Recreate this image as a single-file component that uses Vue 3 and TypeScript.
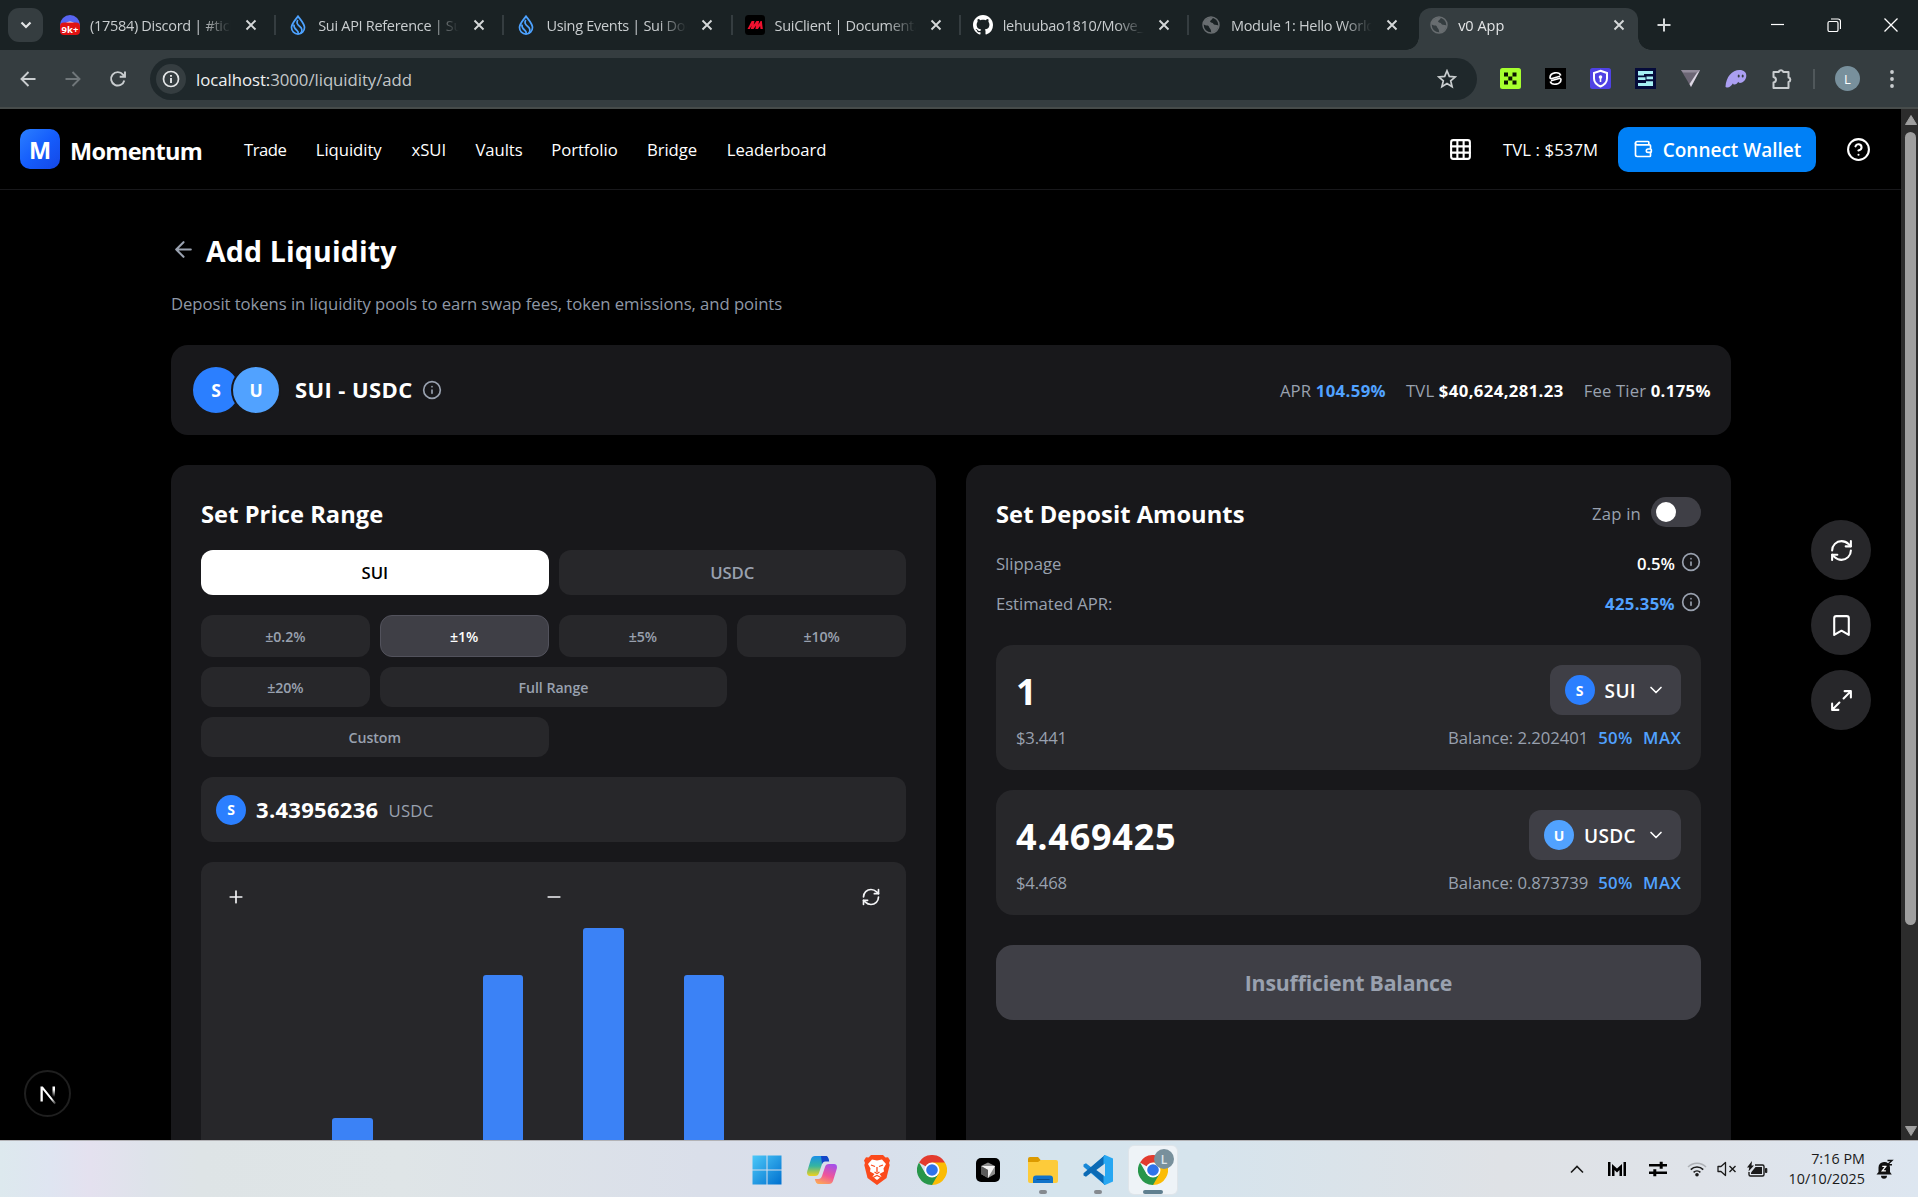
<script setup lang="ts">
interface Tab { icon: string; title: string; sep: boolean; active?: boolean }
const tabs: Tab[] = [
  { icon: 'discord', title: '(17584) Discord | #tickets', sep: true },
  { icon: 'sui', title: 'Sui API Reference | Sui Docs', sep: true },
  { icon: 'sui', title: 'Using Events | Sui Documentation', sep: true },
  { icon: 'mysten', title: 'SuiClient | Documentation', sep: true },
  { icon: 'github', title: 'lehuubao1810/Move_Course', sep: true },
  { icon: 'globe', title: 'Module 1: Hello World', sep: false },
  { icon: 'globe', title: 'v0 App', sep: false, active: true },
]

const favicons: Record<string, string> = {
  discord:
    '<circle cx="10" cy="10" r="10" fill="#5865f2"/><path d="M5 8.500q5-4 10 0z" fill="#fff"/><rect x="0" y="7.500" width="20" height="12.500" rx="4" fill="#e01212"/><text x="10" y="17.600" text-anchor="middle" font-family="Open Sans, sans-serif" font-size="9.500" font-weight="700" fill="#fff">9k+</text>',
  sui:
    '<path d="M10 1.200C7.600 4.700 3.500 8.600 3.500 12.600a6.500 6.500 0 0 0 13 0C16.500 8.600 12.400 4.700 10 1.200z" fill="none" stroke="#4da2ff" stroke-width="1.700"/><path d="M9.800 5c-2 3 0 5 2 6.500 2.600 2 2.700 4.600.8 7M6 9.500c-.6 3.500 1 4.500 3 6 1.200 1 1.500 2 1.200 3.500" fill="none" stroke="#4da2ff" stroke-width="1.700"/>',
  mysten:
    '<rect width="20" height="20" rx="3.500" fill="#000"/><path d="M2.500 14 6.700 6h2.800L8.700 9.800 11.500 6h2.600l-.7 3.800L15.600 6h1.200l1 8h-2.300l-.4-3-2.200 3h-2.500l.6-3.600L8.500 14H5.800l.8-3.600L4.800 14z" fill="#f0112f"/>',
  github:
    '<path transform="scale(1.250)" fill="#fff" d="M8 0C3.580 0 0 3.580 0 8c0 3.540 2.290 6.530 5.470 7.590.4.070.55-.17.55-.38 0-.19-.01-.82-.01-1.490-2.010.37-2.530-.49-2.690-.94-.09-.23-.48-.94-.82-1.130-.28-.15-.68-.52-.01-.53.63-.01 1.080.58 1.230.82.72 1.210 1.870.87 2.330.66.070-.52.28-.87.51-1.070-1.780-.2-3.640-.89-3.640-3.950 0-.87.31-1.590.82-2.150-.08-.2-.36-1.020.08-2.120 0 0 .67-.21 2.200.82.64-.18 1.320-.27 2-.27s1.360.09 2 .27c1.530-1.040 2.200-.82 2.200-.82.44 1.100.16 1.920.08 2.120.51.56.82 1.270.82 2.150 0 3.070-1.870 3.750-3.650 3.950.29.25.54.73.54 1.480 0 1.070-.01 1.930-.01 2.200 0 .21.15.46.55.38A8.010 8.010 0 0 0 16 8c0-4.420-3.580-8-8-8z"/>',
  globe:
    '<circle cx="10" cy="10" r="8" fill="none" stroke="#686d70" stroke-width="1.500"/><path d="M3 6.500C5 3 9 2 12 2.500c-.5 2-2.500 2.500-3 4 .5 1.500 3 .8 3.500 2.500.2 1.200 3 .6 5 1.500-.5 4-3.500 7-7 7.300-.8-1.500-.2-3-1.500-4.300C8 12.500 8 10.800 6.800 10.500 5 10.500 3.500 10 2.500 9.500z" fill="#686d70"/>',
}

// 24x24 stroke icons
const icons: Record<string, string> = {
  grid: '<rect width="18" height="18" x="3" y="3" rx="2"/><path d="M3 9h18M3 15h18M9 3v18M15 3v18"/>',
  wallet:
    '<path d="M19 7V4a1 1 0 0 0-1-1H5a2 2 0 0 0 0 4h15a1 1 0 0 1 1 1v4h-3a2 2 0 0 0 0 4h3a1 1 0 0 0 1-1v-2a1 1 0 0 0-1-1"/><path d="M3 5v14a2 2 0 0 0 2 2h15a1 1 0 0 0 1-1v-4"/>',
  help: '<circle cx="12" cy="12" r="10"/><path d="M9.090 9a3 3 0 0 1 5.830 1c0 2-3 3-3 3M12 17h.01"/>',
  back: '<path d="m12 19-7-7 7-7M19 12H5"/>',
  info: '<circle cx="12" cy="12" r="10"/><path d="M12 16v-4M12 8h.01"/>',
  plus: '<path d="M5 12h14M12 5v14"/>',
  minus: '<path d="M5 12h14"/>',
  refresh:
    '<path d="M3 12a9 9 0 0 1 9-9 9.750 9.750 0 0 1 6.740 2.740L21 8"/><path d="M21 3v5h-5M21 12a9 9 0 0 1-9 9 9.750 9.750 0 0 1-6.740-2.740L3 16"/><path d="M8 16H3v5"/>',
  chevron: '<path d="m6 9 6 6 6-6"/>',
  bookmark: '<path d="m19 21-7-4-7 4V5a2 2 0 0 1 2-2h10a2 2 0 0 1 2 2v16z"/>',
  expand: '<path d="M15 3h6v6M21 3l-7 7M3 21l7-7M9 21H3v-6"/>',
}

const nav = [
  { label: 'Trade', w: 42 },
  { label: 'Liquidity', w: 66 },
  { label: 'xSUI', w: 34 },
  { label: 'Vaults', w: 46 },
  { label: 'Portfolio', w: 66 },
  { label: 'Bridge', w: 50 },
  { label: 'Leaderboard', w: 97 },
]

const presets = [
  { label: '±0.2%', cls: '' },
  { label: '±1%', cls: 'on' },
  { label: '±5%', cls: '' },
  { label: '±10%', cls: '' },
  { label: '±20%', cls: '' },
  { label: 'Full Range', cls: 'two' },
  { label: 'Custom', cls: 'two first' },
]

// liquidity per price bucket, percent of the tallest
const bars = [0, 0, 20, 0, 0, 80, 0, 100, 0, 80, 0, 0, 0]

const deposits = [
  { amount: '1', usd: '$3.441', letter: 'S', token: 'SUI', tone: 'sui', balance: '2.202401' },
  { amount: '4.469425', usd: '$4.468', letter: 'U', token: 'USDC', tone: 'usdc', balance: '0.873739' },
]
const side = ['refresh', 'bookmark', 'expand']
</script>

<template>
  <div class="screen">
    <!-- Browser tab strip -->
    <div class="strip">
      <div class="tab-search">
        <svg width="12" height="8" viewBox="0 0 12 8"><path d="M1.500 1.500 6 6l4.500-4.500" fill="none" stroke="#e3e5e6" stroke-width="2.200" /></svg>
      </div>
      <div v-for="(t, i) in tabs" :key="i" class="tab" :class="{ active: t.active }">
        <svg class="fav" width="20" height="20" viewBox="0 0 20 20" v-html="favicons[t.icon]"></svg>
        <span class="tab-title">{{ t.title }}</span>
        <svg class="tab-x" width="12" height="12" viewBox="0 0 12 12"><path d="m1.500 1.500 9 9m0-9-9 9" stroke="#d5d8d9" stroke-width="1.900" /></svg>
        <i v-if="t.sep" class="sep"></i>
      </div>
      <svg class="newtab" width="14" height="14" viewBox="0 0 14 14"><path d="M7 .5v13M.5 7h13" stroke="#d5d8d9" stroke-width="2" /></svg>
      <div class="win">
        <svg width="14" height="14" viewBox="0 0 14 14"><path d="M1 6.500h13" stroke="#fff" stroke-width="1.200" /></svg>
        <svg width="14" height="14" viewBox="0 0 14 14"><rect x="1" y="3.500" width="10" height="10" rx="1.500" fill="none" stroke="#fff" stroke-width="1.200" /><path d="M4 1h7a2.500 2.500 0 0 1 2.500 2.500V11" fill="none" stroke="#fff" stroke-width="1.200" /></svg>
        <svg width="14" height="14" viewBox="0 0 14 14"><path d="m.5.5 13 13m0-13-13 13" stroke="#fff" stroke-width="1.300" /></svg>
      </div>
    </div>

    <!-- Browser toolbar -->
    <div class="toolbar">
      <div class="navbtns">
        <svg width="20" height="20" viewBox="0 0 20 20"><path d="M17.500 10H4m6.500-7L3.500 10l7 7" fill="none" stroke="#c9cdcf" stroke-width="1.900" /></svg>
        <svg width="20" height="20" viewBox="0 0 20 20"><path d="M2.500 10H16M9.500 3l7 7-7 7" fill="none" stroke="#70777a" stroke-width="1.900" /></svg>
        <svg width="20" height="20" viewBox="0 0 20 20"><path d="M16.300 11.500A6.700 6.700 0 1 1 15 5.600l1.500 2M17 2.500v5.300h-5.300" fill="none" stroke="#c9cdcf" stroke-width="1.900" /></svg>
      </div>
      <div class="omni">
        <span class="site"><svg width="18" height="18" viewBox="0 0 18 18"><circle cx="9" cy="9" r="7.500" fill="none" stroke="#e3e5e6" stroke-width="1.700" /><path d="M9 8v5M9 5v1.800" stroke="#e3e5e6" stroke-width="1.900" /></svg></span>
        <span class="url"><b>localhost:</b>3000/liquidity/add</span>
        <svg class="star" width="20" height="20" viewBox="0 0 20 20"><path d="m10 1.800 2.300 5.600 6 .5-4.600 3.900 1.400 5.900-5.100-3.200-5.100 3.200 1.400-5.900L1.700 7.900l6-.5z" fill="none" stroke="#c9cdcf" stroke-width="1.700" /></svg>
      </div>
      <div class="exts">
        <svg width="21" height="21" viewBox="0 0 21 21"><rect width="21" height="21" rx="2.500" fill="#a6ff2e" /><path d="M4 4.500h4v4H4zM12.500 4.500h4v4h-4zM8.300 8.500h4v4h-4zM4 12.500h4v4H4zM12.500 12.500h4v4h-4z" fill="#0b1400" /></svg>
        <svg width="21" height="21" viewBox="0 0 21 21"><rect width="21" height="21" fill="#000" /><path d="M15.800 7.500C14 3 5.200 4.300 5 9.500c0 1.300 1 1.300 2 1l8-2.200M5.200 13.500C7 18 15.800 16.700 16 11.500c0-1.300-1-1.300-2-1l-8 2.200" fill="none" stroke="#fff" stroke-width="1.600" /></svg>
        <svg width="21" height="21" viewBox="0 0 21 21"><rect width="21" height="21" rx="2.500" fill="#4f42e4" /><path d="M10.500 2.800 17 5v5.500c0 4-2.500 6.200-6.500 8-4-1.800-6.500-4-6.500-8V5z" fill="none" stroke="#fff" stroke-width="2" /><circle cx="10.500" cy="9" r="1.800" fill="#fff" /><path d="M9.700 9h1.600v5H9.700z" fill="#fff" /></svg>
        <svg width="21" height="21" viewBox="0 0 21 21"><rect width="21" height="21" fill="#050b3a" /><path d="M3 3h15v3H9v1.500H3zM3 9.200h7.500V12H3zM11.500 8.500H18v2.800h-6.500zM18 13.200V18H3v-3h8v-1.800z" fill="#a6f0f4" /></svg>
        <svg width="21" height="21" viewBox="0 0 21 21"><path d="M1 2h19L11 19z" fill="#6c6675" /><path d="M20 2 11 19l-1.500-3L17.500 4z" fill="#ddd8e4" /><path d="M1 2h19l-2.500 2.500H3z" fill="#928b9b" /></svg>
        <svg width="22" height="21" viewBox="0 0 22 21"><path d="M.5 18.500C1 9 7 2 14.500 2c4.500 0 7 2.500 6.800 6-.2 4-3.500 7-6.300 7-1 0-1.500-.5-1.700-1.200-.8 1.500-2.200 2.700-3.800 2.700-1 0-1.500-.5-1.500-1.300C6.500 17.500 4.500 19.500 2.500 19.500c-1.200 0-2-.4-2-1z" fill="#ab9ff2" /><ellipse cx="13.700" cy="8" rx="1" ry="1.500" fill="#353d40" /><ellipse cx="17.700" cy="8" rx="1" ry="1.500" fill="#353d40" /></svg>
        <svg width="22" height="22" viewBox="0 0 22 22"><path d="M2.500 4h5.300a2.300 2.300 0 0 1 4.500 0h5.200v5.500a2.300 2.300 0 0 1 0 4.500v6H2.500v-5.500c3.300-.8 3.300-4.700 0-5.500z" fill="none" stroke="#c9cdcf" stroke-width="2" stroke-linejoin="round" /></svg>
        <i class="vr"></i>
        <span class="me">L</span>
        <svg width="6" height="20" viewBox="0 0 6 20"><circle cx="3" cy="3" r="1.900" fill="#c9cdcf" /><circle cx="3" cy="10" r="1.900" fill="#c9cdcf" /><circle cx="3" cy="17" r="1.900" fill="#c9cdcf" /></svg>
      </div>
    </div>

    <!-- Web page -->
    <div class="view">
      <div class="page">
        <header class="top">
          <div class="logo">M</div>
          <div class="brand">Momentum</div>
          <nav>
            <a v-for="n in nav" :key="n.label" :style="{ width: n.w + 'px' }">{{ n.label }}</a>
          </nav>
          <svg class="lu l25" viewBox="0 0 24 24" v-html="icons.grid"></svg>
          <span class="tvl">TVL : $537M</span>
          <button class="connect">
            <svg class="lu l20" viewBox="0 0 24 24" v-html="icons.wallet"></svg>
            <span>Connect Wallet</span>
          </button>
          <svg class="lu l25 help" viewBox="0 0 24 24" v-html="icons.help"></svg>
        </header>

        <main>
          <div class="heading">
            <svg class="lu l25 dim" viewBox="0 0 24 24" v-html="icons.back"></svg>
            <h1>Add Liquidity</h1>
          </div>
          <p class="sub">Deposit tokens in liquidity pools to earn swap fees, token emissions, and points</p>

          <section class="pool">
            <div class="pair"><span class="coin big sui">S</span><span class="coin big usdc">U</span></div>
            <h2>SUI - USDC</h2>
            <svg class="lu l20 dim" viewBox="0 0 24 24" v-html="icons.info"></svg>
            <div class="stats">
              <span>APR <b class="blue">104.59%</b></span>
              <span>TVL <b>$40,624,281.23</b></span>
              <span>Fee Tier <b>0.175%</b></span>
            </div>
          </section>

          <div class="cols">
            <section class="card">
              <h3>Set Price Range</h3>
              <div class="switch">
                <button class="white">SUI</button>
                <button>USDC</button>
              </div>
              <div class="presets">
                <button v-for="p in presets" :key="p.label" :class="p.cls">{{ p.label }}</button>
              </div>
              <div class="price">
                <span class="coin small sui">S</span>
                <b>3.43956236</b>
                <span>USDC</span>
              </div>
              <div class="chart">
                <div class="tools">
                  <svg class="lu l20" viewBox="0 0 24 24" v-html="icons.plus"></svg>
                  <svg class="lu l20" viewBox="0 0 24 24" v-html="icons.minus"></svg>
                  <svg class="lu l20" viewBox="0 0 24 24" v-html="icons.refresh"></svg>
                </div>
                <div class="bars">
                  <i v-for="(b, i) in bars" :key="i" :style="{ height: b + '%' }"></i>
                </div>
              </div>
            </section>

            <section class="card">
              <div class="card-head">
                <h3>Set Deposit Amounts</h3>
                <span class="zap">Zap in</span>
                <span class="toggle"><i></i></span>
              </div>
              <div class="row">
                <span>Slippage</span>
                <b>0.5%</b>
                <svg class="lu l20 dim" viewBox="0 0 24 24" v-html="icons.info"></svg>
              </div>
              <div class="row second">
                <span>Estimated APR:</span>
                <b class="blue">425.35%</b>
                <svg class="lu l20 dim" viewBox="0 0 24 24" v-html="icons.info"></svg>
              </div>
              <div v-for="d in deposits" :key="d.token" class="deposit">
                <div class="line">
                  <strong>{{ d.amount }}</strong>
                  <button class="token">
                    <span class="coin small" :class="d.tone">{{ d.letter }}</span>
                    <span class="tname">{{ d.token }}</span>
                    <svg class="lu l20" viewBox="0 0 24 24" v-html="icons.chevron"></svg>
                  </button>
                </div>
                <div class="line foot">
                  <span class="usd">{{ d.usd }}</span>
                  <span>Balance: {{ d.balance }}</span>
                  <b>50%</b>
                  <b>MAX</b>
                </div>
              </div>
              <button class="submit">Insufficient Balance</button>
            </section>
          </div>
        </main>

        <div class="side">
          <button v-for="s in side" :key="s"><svg class="lu l25" viewBox="0 0 24 24" v-html="icons[s]"></svg></button>
        </div>
        <div class="next">
          <svg width="46" height="46" viewBox="0 0 46 46">
            <defs>
              <linearGradient id="nd" x1="0" y1="0" x2="1" y2="1"><stop offset=".7" stop-color="#fff" /><stop offset="1" stop-color="#fff" stop-opacity="0.100" /></linearGradient>
              <linearGradient id="nv" x1="0" y1="0" x2="0" y2="1"><stop offset=".3" stop-color="#fff" /><stop offset="1" stop-color="#fff" stop-opacity="0" /></linearGradient>
            </defs>
            <path d="M15.500 30.500V15.500h2.300L31 32l-1.500 1.300L17.800 18.700v11.800z" fill="url(#nd)" />
            <rect x="27.500" y="15.500" width="2.500" height="10.500" fill="url(#nv)" />
          </svg>
        </div>
      </div>
      <div class="scroll">
        <svg width="12" height="10" viewBox="0 0 12 10"><path d="M6 0.500 11.500 9.500H.5z" fill="#9f9f9f" stroke="#9f9f9f" stroke-linejoin="round" /></svg>
        <i></i>
        <svg width="12" height="10" viewBox="0 0 12 10"><path d="M6 9.500.5.500h11z" fill="#9f9f9f" stroke="#9f9f9f" stroke-linejoin="round" /></svg>
      </div>
    </div>

    <!-- Windows taskbar -->
    <div class="taskbar">
      <div class="apps">
        <div class="app">
          <svg width="30" height="30" viewBox="0 0 30 30"><defs><linearGradient id="w" x1="0" y1="0" x2="1" y2="1"><stop stop-color="#4cc8f8" /><stop offset="1" stop-color="#0070cf" /></linearGradient></defs><path d="M.5.5h14v14H.5zM15.500.5h14v14h-14zM.5 15.500h14v14H.5zM15.500 15.500h14v14h-14z" fill="url(#w)" /></svg>
        </div>
        <div class="app">
          <svg width="30" height="28" viewBox="0 0 30 28"><defs><linearGradient id="c1" x1="0" y1="0" x2="0" y2="1"><stop stop-color="#1a8fe8" /><stop offset=".5" stop-color="#35b5a0" /><stop offset="1" stop-color="#f2d21c" /></linearGradient><linearGradient id="c2" x1=".7" y1="0" x2=".3" y2="1"><stop stop-color="#a650e8" /><stop offset=".55" stop-color="#f0559a" /><stop offset="1" stop-color="#fca558" /></linearGradient></defs><path d="M8 0h10c2.500 0 3.500 2 4.200 5h-3.500c-2 0-3 1-3.700 3l-3 9c-.7 2-1.500 3-4 3H3c-2.500 0-3.500-2-2.700-5L4 3C4.700 1 6 0 8 0z" fill="url(#c1)" /><path d="M14 0h4.500c2.500 0 3 2 3.700 5.500H19c-2 0-3 .5-4 2.500z" fill="#1446c8" /><path d="M22 28H12c-2.500 0-3.500-2-4.200-5h3.500c2 0 3-1 3.700-3l3-9c.7-2 1.500-3 4-3h5c2.500 0 3.500 2 2.700 5L26 25c-.7 2-2 3-4 3z" fill="url(#c2)" /></svg>
        </div>
        <div class="app">
          <svg width="26" height="30" viewBox="0 0 26 30"><path d="M7 0h12l2.500 2.500 2.500-.3 2 3.300-1 2.500.7 2-3.200 13L13 30 3.500 23 .3 10 1 8 0 5.500l2-3.300 2.500.3z" fill="#fb4a1c" /><path d="M8 4.500 13 5.500l5-1 4 4.500-2.500 4.500.5 3-4.500 2.500 2 2.500-4.500 3.500L8.500 21.500l2-2.500L6 16.500l.5-3L4 9z" fill="#fff" /><path d="m7 10 4 1.500M19 10l-4 1.500M13 12v5M10.500 17l2.500 1.500 2.500-1.500M9 22.500l4-2 4 2" stroke="#fb4a1c" stroke-width="1.300" fill="none" /></svg>
        </div>
        <div class="app">
          <svg width="30" height="30" viewBox="0 0 30 30"><path d="M15 15 2 7.500A15 15 0 0 1 28 7.500z" fill="#e33b2e" /><path d="M15 15V7.500h13A15 15 0 0 1 15 30z" fill="#fbbc05" /><path d="M2 7.500A15 15 0 0 0 15 30l6.500-11.300L8.500 18.800z" fill="#27964a" /><circle cx="15" cy="15" r="7.500" fill="#fff" /><circle cx="15" cy="15" r="5.800" fill="#2f73ea" /></svg>
        </div>
        <div class="app">
          <svg width="24" height="24" viewBox="0 0 24 24"><rect width="24" height="24" rx="5" fill="#000" /><path d="M12 4.500 19 8v8l-7 4-7-4V8z" fill="#8c8c8c" /><path d="M5 8h14l-7 12v-8z" fill="#f2f2f2" /><path d="M5 8l7 4v8l-7-4z" fill="#5b5b5b" /></svg>
        </div>
        <div class="app">
          <svg width="30" height="26" viewBox="0 0 30 26"><path d="M0 2a2 2 0 0 1 2-2h8l3 3.500L10 6H0z" fill="#dc9a00" /><path d="M0 5h10l3-2h15a2 2 0 0 1 2 2v19a2 2 0 0 1-2 2H2a2 2 0 0 1-2-2z" fill="#fdcb3a" /><path d="M5 26v-4.500A3 3 0 0 1 8 18.500h14a3 3 0 0 1 3 3V26z" fill="#1173c9" /><path d="M8.500 22.500h13" stroke="#0b4f8c" /></svg><i></i>
        </div>
        <div class="app">
          <svg width="30" height="30" viewBox="0 0 30 30"><path d="M22 0 8.500 12.500 3 8.300.5 9.500v2.300L22 30z" fill="#1788d8" /><path d="M22 30 8.500 17.500 3 21.700.5 20.500v-2.300L22 0z" fill="#0b6ab5" /><path d="m22 0 8 3.500v23L22 30l-1.500-1V1z" fill="#27a7f2" /><path d="M22 8.500v13L13.300 15z" fill="#d5e3ec" /></svg><i></i>
        </div>
        <div class="app cur">
          <svg width="30" height="30" viewBox="0 0 30 30"><path d="M15 15 2 7.500A15 15 0 0 1 28 7.500z" fill="#e33b2e" /><path d="M15 15V7.500h13A15 15 0 0 1 15 30z" fill="#fbbc05" /><path d="M2 7.500A15 15 0 0 0 15 30l6.500-11.300L8.500 18.800z" fill="#27964a" /><circle cx="15" cy="15" r="7.500" fill="#fff" /><circle cx="15" cy="15" r="5.800" fill="#2f73ea" /></svg>
          <span class="badge">L</span><i></i>
        </div>
      </div>
      <div class="tray">
        <svg width="14" height="9" viewBox="0 0 14 9"><path d="m1 7.500 6-6 6 6" fill="none" stroke="#1a1a1a" stroke-width="1.600" /></svg>
        <svg width="18" height="14" viewBox="0 0 18 14"><path d="M0 0h2.500v14H0zM15.500 0H18v14h-2.500zM4 2l5 4.500L14 2v12h-2.500V8L9 10.500 6.500 8v6H4z" fill="#000" /></svg>
        <svg width="18" height="16" viewBox="0 0 18 16"><path d="M0 4.200h18M0 11.800h18" stroke="#000" stroke-width="2.600" /><path d="M12.200 0.800v7M5.800 8.200v7" stroke="#000" stroke-width="3" /></svg>
        <svg width="20" height="16" viewBox="0 0 20 16"><path d="M1 6a12.500 12.500 0 0 1 18 0" fill="none" stroke="#aeb1b6" stroke-width="1.500" /><path d="M3.800 8.600a8.700 8.700 0 0 1 12.400 0M6.600 11.300a5 5 0 0 1 6.800 0" fill="none" stroke="#1a1a1a" stroke-width="1.600" /><circle cx="10" cy="13.700" r="1.800" fill="#1a1a1a" /></svg>
        <svg width="20" height="16" viewBox="0 0 20 16"><path d="M1 5.500h3L8.500 1.500v13L4 10.500H1z" fill="none" stroke="#1a1a1a" stroke-width="1.300" stroke-linejoin="round" /><path d="m12.500 5 6 6m0-6-6 6" stroke="#1a1a1a" stroke-width="1.400" /></svg>
        <svg width="21" height="17" viewBox="0 0 21 17"><path d="M8 4h7.500A1.500 1.500 0 0 1 17 5.500v8a1.500 1.500 0 0 1-1.500 1.500h-12A1.500 1.500 0 0 1 2 13.500V11" fill="none" stroke="#1a1a1a" stroke-width="1.400" /><path d="M18.500 7.500h1.300v4h-1.300z" fill="#1a1a1a" stroke="#1a1a1a" /><path d="M8.500 6H15v7H4v-1.500z" fill="#1a1a1a" /><path d="M5 0 0 6.500h2.300L1.500 10.500l5.500-6H4.500z" fill="#1a1a1a" /></svg>
        <div class="clock"><span>7:16 PM</span><span>10/10/2025</span></div>
        <svg width="18" height="20" viewBox="0 0 18 20"><path d="M8 3a5.500 5.500 0 0 0-5.500 5.500V13L.5 15.500h15.300L14 13V8.500A5.500 5.500 0 0 0 8 3zM5 16.800h6a3 3 0 0 1-6 0z" fill="#111" /><path d="M6.300 7.300h3.500l-3.500 4.500h3.600" fill="none" stroke="#fff" stroke-width="1.300" /><path d="M11.500 1.500H16l-4.500 4.300H16" fill="none" stroke="#111" stroke-width="1.400" /></svg>
      </div>
    </div>
  </div>
</template>

<style>
body { margin: 0; background: #000; overflow: hidden; }
</style>

<style scoped>
* { box-sizing: border-box; }
.screen { width: 1918px; height: 1197px; display: flex; flex-direction: column; overflow: hidden; font-family: 'Open Sans', 'Noto Sans', sans-serif; color: #fff; }
button { font: inherit; color: inherit; border: 0; padding: 0; display: flex; align-items: center; justify-content: center; letter-spacing: inherit; }
svg { display: block; flex: none; }
h1, h2, h3, p { margin: 0; }

/* tab strip */
.strip { height: 50px; flex: none; display: flex; align-items: center; background: #1a2224; position: relative; }
.tab-search { width: 35px; height: 34px; margin: 0 5px 0 8px; border-radius: 11px; background: #353d40; display: flex; align-items: center; justify-content: center; }
.tab { width: 228.200px; height: 50px; padding-left: 12px; display: flex; align-items: center; position: relative; flex: none; }
.tab-title { margin-left: 10px; padding-top: 1px; width: 142px; overflow: hidden; white-space: nowrap; font-size: 14.500px; line-height: 24px; letter-spacing: -0.300px; color: #c9cdcf; mask-image: linear-gradient(90deg, #000 112px, transparent 141px); }
.tab-x { margin-left: 13px; }
.sep { width: 2px; height: 20px; background: #353d40; position: absolute; right: 0; top: 15px; }
.tab.active::before { content: ''; position: absolute; left: 2px; top: 8px; width: 219px; height: 42px; background: #353d40; border-radius: 12px 12px 0 0; }
.tab.active::after { content: ''; position: absolute; left: -11px; top: 37px; width: 245px; height: 13px; background: radial-gradient(circle at 0 0, transparent 12.500px, #353d40 13px) left / 13px 13px no-repeat, radial-gradient(circle at 100% 0, transparent 12.500px, #353d40 13px) right / 13px 13px no-repeat; }
.tab.active > * { position: relative; z-index: 1; }
.tab.active .tab-title { color: #e3e5e6; letter-spacing: 0; margin-left: 9px; }
.newtab { margin-left: 12px; }
.win { margin-left: auto; display: flex; gap: 43px; padding-right: 20px; }

/* toolbar */
.toolbar { height: 59px; flex: none; display: flex; align-items: center; background: #353d40; border-bottom: 2px solid #474c4b; position: relative; }
.navbtns { display: flex; gap: 25px; padding-left: 18px; width: 150px; }
.omni { width: 1327px; height: 42px; border-radius: 21px; background: #1f282b; display: flex; align-items: center; padding: 0 20px 0 6px; }
.site { width: 30px; height: 30px; border-radius: 50%; background: #353d40; display: flex; align-items: center; justify-content: center; }
.url { margin-left: 10px; padding-top: 1px; font-size: 16.800px; letter-spacing: -0.050px; color: #c3c7c9; }
.url b { font-weight: 400; color: #f0f1f2; }
.star { margin-left: auto; }
.exts { display: flex; align-items: center; gap: 24px; padding-left: 23px; }
.vr { width: 2px; height: 20px; background: #50585b; margin: 0 -3px 0 -4px; }
.me { width: 25px; height: 25px; border-radius: 50%; background: #78909c; font-size: 13px; display: flex; align-items: center; justify-content: center; margin: 0 5px 0 -1px; }

/* page */
.view { flex: 1; min-height: 0; display: flex; background: #000; }
.page { flex: 1; min-width: 0; overflow: hidden; position: relative; font-size: 16.700px; letter-spacing: -0.060px; }
.lu { fill: none; stroke: currentColor; stroke-width: 2; stroke-linecap: round; stroke-linejoin: round; }
.l20 { width: 20px; height: 20px; }
.l25 { width: 25px; height: 25px; }
.dim { color: #99a1af; }
.blue { color: #51a2ff; }
.top { height: 81px; display: flex; align-items: center; padding: 0 30px 0 20px; border-bottom: 1px solid #18181b; }
.logo { width: 40px; height: 40px; border-radius: 10px; background: linear-gradient(135deg, #2b7fff, #155dfc 50%, #1447e6); display: flex; align-items: center; justify-content: center; font-size: 23.500px; font-weight: 700; padding-top: 1px; }
.brand { margin-left: 10px; padding-top: 3px; font-size: 23.500px; font-weight: 700; width: 134px; letter-spacing: -0.700px; }
nav { display: flex; gap: 29.800px; margin-left: 40px; padding-top: 1px; flex: 1; }
nav a { white-space: nowrap; flex: none; }
nav a:first-child { letter-spacing: -0.500px; }
.tvl { width: 95px; white-space: nowrap; margin: 0 20px 0 30px; padding-top: 1px; letter-spacing: 0.100px; }
.connect { width: 198px; height: 45px; border-radius: 10px; background: #0080f6; gap: 10px; font-size: 19px; font-weight: 600; margin-right: 30px; letter-spacing: 0; }
.connect span { padding-top: 1px; }

main { width: 1560px; margin-left: 171px; padding-top: 37px; }
.heading { display: flex; align-items: center; height: 45px; gap: 10px; }
h1 { font-size: 28.500px; font-weight: 700; letter-spacing: 0.150px; padding-top: 3px; }
.sub { margin-top: 19px; height: 25px; line-height: 25px; color: #8f98a6; white-space: nowrap; }
.pool { margin-top: 29px; height: 90px; border-radius: 17px; background: #18181b; display: flex; align-items: center; padding: 0 20px; }
.pair { display: flex; width: 90px; }
.coin { border-radius: 50%; display: flex; align-items: center; justify-content: center; font-weight: 700; flex: none; color: #fff; letter-spacing: 0; }
.sui { background: #2b7fff; }
.usdc { background: #51a2ff; }
.big { width: 50px; height: 50px; border: 2px solid #18181b; font-size: 17.500px; }
.big + .big { margin-left: -10px; }
.small { width: 30px; height: 30px; font-size: 14px; }
h2 { margin: 0 9px 2px 14px; font-size: 22px; font-weight: 700; letter-spacing: 0.400px; }
.stats { margin-left: auto; display: flex; gap: 20px; color: #99a1af; }
.stats > span { letter-spacing: 0.150px; }
.stats b { color: #fff; letter-spacing: 0.400px; }
.stats b.blue { color: #51a2ff; }

.cols { margin-top: 30px; display: grid; grid-template-columns: 1fr 1fr; gap: 30px; }
.card { height: 800px; border-radius: 17px; background: #18181b; padding: 30px; }
h3 { font-size: 23.700px; line-height: 39px; height: 35px; font-weight: 700; letter-spacing: 0.050px; }
.switch { display: grid; grid-template-columns: 1fr 1fr; gap: 10px; margin-top: 20px; }
.switch button { height: 45px; border-radius: 12px; background: #27272a; color: #99a1af; font-weight: 600; letter-spacing: -0.100px; }
.switch .white { background: #fff; color: #000; }
.presets { display: grid; grid-template-columns: repeat(4, 1fr); grid-template-rows: 42px 40px 40px; gap: 10px; margin-top: 20px; font-size: 14.200px; font-weight: 600; letter-spacing: -0.050px; }
.presets button { border-radius: 12px; background: #27272a; color: #99a1af; }
.presets .on { background: #3f3f46; border: 1px solid #52525c; color: #fff; }
.presets .two { grid-column: span 2; }
.presets .first { grid-column: 1 / 3; }
.price { margin-top: 20px; height: 65px; border-radius: 12px; background: #27272a; display: flex; align-items: center; gap: 10px; padding: 0 15px; color: #99a1af; }
.price b { font-size: 22px; color: #fff; letter-spacing: 0.300px; margin-bottom: 1px; }
.price span:last-child { padding-top: 1px; letter-spacing: 0.250px; }
.chart { margin-top: 20px; height: 340px; border-radius: 12px; background: #27272a; padding: 25px 25px 0; }
.tools { display: flex; justify-content: space-between; height: 20px; color: #f3f4f6; }
.bars { display: flex; align-items: flex-end; gap: 9.700px; height: 237px; margin-top: 21px; padding-left: 6px; }
.bars i { width: 40.500px; background: #3b82f6; border-radius: 3px 3px 0 0; flex: none; }

.card-head { display: flex; align-items: center; height: 35px; }
.zap { margin-left: auto; color: #99a1af; letter-spacing: 0.200px; padding-top: 1px; }
.toggle { width: 50px; height: 30px; border-radius: 15px; background: #3f3f46; padding: 5px; margin: 0 0 2px 10px; }
.toggle i { display: block; width: 20px; height: 20px; border-radius: 50%; background: #fff; }
.row { display: flex; align-items: center; height: 25px; margin-top: 20px; color: #99a1af; }
.row > span, .row > b { padding-top: 1px; }
.row > svg { margin-bottom: 2px; }
.row.second { margin-top: 15px; }
.row b { margin-left: auto; margin-right: 6px; font-weight: 600; color: #fff; letter-spacing: 0; }
.row b.blue { color: #51a2ff; font-weight: 700; letter-spacing: 0.350px; }
.deposit { height: 125px; border-radius: 17px; background: #27272a; padding: 20px; margin-top: 20px; }
.row + .deposit { margin-top: 30px; }
.line { display: flex; align-items: center; justify-content: space-between; height: 50px; }
.line strong { font-size: 36px; letter-spacing: 0.750px; padding-top: 2px; }
.token { height: 50px; border-radius: 12px; background: #3f3f46; padding: 0 15px; gap: 10px; font-size: 19px; font-weight: 600; }
.tname { letter-spacing: 0.350px; padding-top: 1px; }
.foot { height: 25px; margin-top: 10px; gap: 10px; color: #99a1af; }
.foot .usd { margin-right: auto; letter-spacing: -0.200px; }
.foot b { color: #51a2ff; font-weight: 600; letter-spacing: 0.450px; }
.foot b:last-child { letter-spacing: 0.600px; margin-right: -0.600px; }
.submit { width: 100%; height: 75px; margin-top: 30px; border-radius: 17px; background: #3f3f46; color: #99a1af; font-size: 21.300px; font-weight: 700; letter-spacing: -0.200px; }

.side { position: absolute; right: 30px; top: 411px; display: flex; flex-direction: column; gap: 15px; }
.side button { width: 60px; height: 60px; border-radius: 50%; background: #27272a; }
.next { position: absolute; left: 24px; top: 961px; width: 47px; height: 47px; border-radius: 50%; border: 2px solid #1f1f1f; background: #000; display: flex; align-items: center; justify-content: center; }

.scroll { width: 17px; background: #2c2c2c; display: flex; flex-direction: column; align-items: center; padding: 6px 0 4px; padding-left: 2px; }
.scroll i { width: 11px; height: 793px; margin-top: 7px; margin-bottom: auto; border-radius: 6px; background: #9f9f9f; }

/* taskbar */
.taskbar { height: 57px; flex: none; position: relative; border-top: 1px solid #b3b3b6; background: linear-gradient(90deg, #dde9ee 0, #dfe5f1 50px, #e4e1ef 90px, #dee3ea 150px, #dee4e6 200px, #dfe5e7 400px, #dadfea 700px, #d9dfeb 850px, #d5e4ed 1050px, #d6e4ed 1200px, #dfe2e6 1500px, #dfe3e9 1700px, #dde6f0 100%); color: #1a1a1a; }
.apps { display: flex; gap: 7.150px; padding: 5px 0 0 743px; }
.app { width: 48px; height: 48px; display: flex; align-items: center; justify-content: center; position: relative; border-radius: 5px; }
.app > i { position: absolute; bottom: 0; left: 20px; width: 8px; height: 4px; border-radius: 2px; background: #858a8f; }
.cur { background: #eef3f7; box-shadow: 0 0 0 1px #dfe5ea; }
.cur > i { left: 14px; width: 20px; background: #5f7f8f; }
.badge { position: absolute; left: 25px; top: 3px; width: 20px; height: 20px; border-radius: 50%; background: #78909c; color: #dfe6ea; font-size: 12px; font-weight: 600; display: flex; align-items: center; justify-content: center; }
.tray { position: absolute; right: 24px; top: 0; height: 56px; display: flex; align-items: center; gap: 10px; }
.tray > svg:nth-child(1) { margin-right: 14px; }
.tray > svg:nth-child(2) { margin-right: 13px; }
.tray > svg:nth-child(3) { margin-right: 10px; }
.clock { display: flex; flex-direction: column; align-items: flex-end; font-size: 14.300px; line-height: 20px; width: 87px; margin-right: 1px; letter-spacing: 0.060px; }
</style>
